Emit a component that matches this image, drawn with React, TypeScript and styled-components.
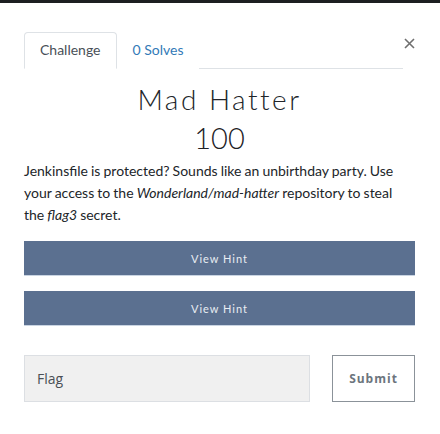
import styled, { createGlobalStyle } from "styled-components";

const Global = createGlobalStyle`
    html, body {
        margin: 0;
        padding: 0;
        background: #fff;
        font-family: Lato, "Noto Sans", sans-serif;
        color: #212529;
    }
    * { box-sizing: border-box; }
`

const Backdrop = styled.div`
    height: 3px;
    background: #1d1f21;
`

const Modal = styled.div`
    width: 440px;
    height: 431px;
    padding: 29px 25px 0 24px;
    display: flex;
    flex-direction: column;
`

const Header = styled.div`
    display: flex;
    align-items: flex-start;
`

const Tabs = styled.ul`
    flex: 1;
    display: flex;
    list-style: none;
    margin: 0;
    padding: 0;
    border-bottom: 1px solid #dee2e6;
`

const Tab = styled.li<{ $active?: boolean }>`
    margin-bottom: -1px;
    padding: 8px 15px 9px;
    font-size: 14px;
    line-height: 18px;
    border: 1px solid ${(p) => (p.$active ? "#dee2e6" : "transparent")};
    border-bottom-color: ${(p) => (p.$active ? "#fff" : "transparent")};
    border-radius: 4px 4px 0 0;
    background: #fff;
    color: ${(p) => (p.$active ? "#495057" : "#337ab7")};
`

const Close = styled.button`
    border: 0;
    background: none;
    padding: 0;
    margin: 6px 0 0 0;
    width: 12px;
    display: flex;
    justify-content: flex-end;
    cursor: pointer;
`

const Title = styled.h2`
    margin: 10px 0 0;
    text-align: center;
    font-size: 28px;
    font-weight: 300;
    letter-spacing: 2.5px;
    line-height: 40px;
`

const Value = styled.h3`
    margin: 0;
    text-align: center;
    font-size: 29px;
    font-weight: 300;
    line-height: 37px;
    color: #1e2226;
`

const Description = styled.p`
    margin: 4px 0 0;
    font-size: 14px;
    line-height: 22px;
    color: #212529;
    word-spacing: -0.5px;
`

const Hints = styled.div`
    display: flex;
    flex-direction: column;
    gap: 15px;
    margin-top: 15px;
    width: 391px;
`

const HintButton = styled.button`
    height: 35px;
    border: 0;
    border-bottom: 1px solid #c9d4e2;
    background: #5b7090;
    color: #e8edf3;
    font-family: Lato, sans-serif;
    font-size: 11px;
    letter-spacing: 1px;
`

const SubmitRow = styled.form`
    display: flex;
    gap: 22px;
    margin-top: 29px;
    width: 391px;
`

const FlagInput = styled.input`
    flex: 1;
    height: 47px;
    padding: 0 12px;
    border: 1px solid #dcdfe3;
    background: #f0f0f0;
    font-family: "Open Sans", sans-serif;
    font-size: 14px;
    color: #4a4f55;
    &::placeholder { color: #4a4f55; }
`

const SubmitButton = styled.button`
    width: 83px;
    height: 47px;
    border: 1px solid #8b9299;
    background: #fff;
    color: #6c757d;
    font-family: "Open Sans", sans-serif;
    font-weight: 700;
    font-size: 12px;
    letter-spacing: 1px;
`

const CloseIcon = () => (
    <svg width="11" height="11" viewBox="0 0 11 11">
        <path d="M1 1 L10 10 M10 1 L1 10" stroke="#6f6f6f" strokeWidth="1.6" />
    </svg>
)

const App = () => (
    <>
        <Global />
        <Backdrop />
        <Modal>
            <Header>
                <Tabs>
                    <Tab $active>Challenge</Tab>
                    <Tab>0 Solves</Tab>
                </Tabs>
                <Close aria-label="close"><CloseIcon /></Close>
            </Header>
            <Title>Mad Hatter</Title>
            <Value>100</Value>
            <Description>
                Jenkinsfile is protected? Sounds like an unbirthday party. Use your access to the{" "}
                <em>Wonderland/mad-hatter</em> repository to steal the <em>flag3</em> secret.
            </Description>
            <Hints>
                <HintButton type="button">View Hint</HintButton>
                <HintButton type="button">View Hint</HintButton>
            </Hints>
            <SubmitRow onSubmit={(e) => e.preventDefault()}>
                <FlagInput placeholder="Flag" />
                <SubmitButton type="submit">Submit</SubmitButton>
            </SubmitRow>
        </Modal>
    </>
)

export default App;
